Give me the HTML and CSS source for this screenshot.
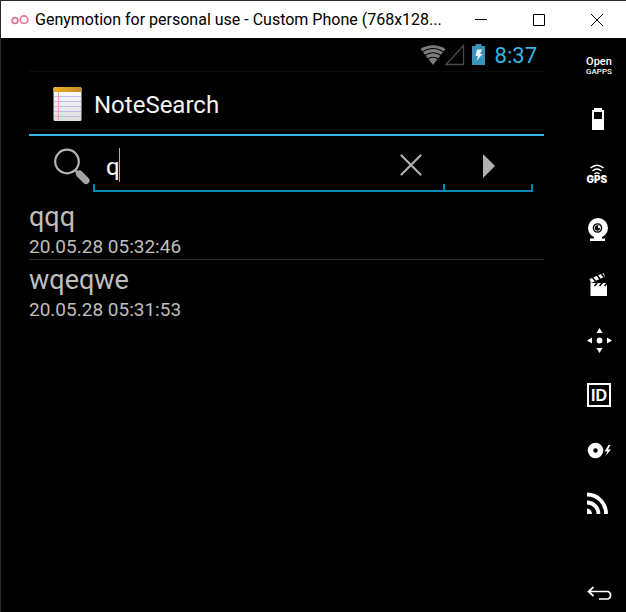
FILE: index.html
```html
<!DOCTYPE html>
<html lang="en">
<head>
<meta charset="utf-8">
<title>Genymotion for personal use</title>
<link rel="stylesheet" href="styles.css">
</head>
<body>
<div class="window">
  <header class="titlebar">
    <svg class="logo" viewBox="11 12 18 14" aria-hidden="true"><g fill="none" stroke="#e8709c" stroke-width="1.7"><circle cx="15" cy="19.5" r="2.9"/><circle cx="24" cy="18.7" r="3.8"/></g></svg>
    <h1 class="title">Genymotion for personal use - Custom Phone (768x128...</h1>
    <button class="win-btn" aria-label="Minimize"><svg viewBox="0 0 12 12"><path d="M0 5.5h12"/></svg></button>
    <button class="win-btn" aria-label="Maximize"><svg viewBox="0 0 12 12"><path d="M.5.5h11v11H.5z"/></svg></button>
    <button class="win-btn" aria-label="Close"><svg viewBox="0 0 12 12"><path d="M0 0l12 12M12 0L0 12"/></svg></button>
  </header>
  <div class="body">
    <main class="phone">
      <div class="status">
        <svg class="status-icons" viewBox="420 42 66 26" aria-hidden="true">
          <path d="M420.500 49Q433 41.500 445.500 49L433 65z" fill="#7d7d7d"/>
          <g fill="none" stroke="#000" stroke-width="1.100"><path d="M421.500 52.500Q433 44.500 444.500 52.500M424 56Q433 49.500 442 56M427 59.500Q433 55 439 59.500"/></g>
          <path d="M463.500 45.500v19h-17.500z" fill="none" stroke="#4a4a4a" stroke-width="1.300"/>
          <path d="M472 46h3.500v-2h6v2h3.500v19h-13z" fill="#3a94b9"/>
          <path d="M477 49.500h5l-2 4.500h2.500l-6 7 1.500-5h-2.500z" fill="#e8f4f8"/>
        </svg>
        <time class="clock">8:37</time>
      </div>
      <div class="actionbar">
        <svg class="app-icon" viewBox="0 0 30 34" aria-hidden="true">
          <defs><linearGradient id="paper" x2="0" y2="1"><stop stop-color="#fff"/><stop offset="1" stop-color="#dcdcdc"/></linearGradient><linearGradient id="band"><stop stop-color="#f3ae22"/><stop offset="1" stop-color="#c58a2c"/></linearGradient></defs>
          <rect x=".5" width="28" height="34" rx="1.500" fill="url(#paper)"/>
          <path d="M.5 5V1.500Q.5 0 2 0h25q1.500 0 1.500 1.500V5z" fill="url(#band)"/>
          <path d="M1 9.500h27M1 14.500h27M1 19.500h27M1 24.500h27M1 29.500h27" stroke="#bdbde8"/>
          <path d="M5.500 5v28" stroke="#f0a4a4"/>
        </svg>
        <h2 class="app-name">NoteSearch</h2>
      </div>
      <form class="search">
        <svg class="magnifier" viewBox="53 147 38 38" aria-hidden="true">
          <circle cx="67" cy="161.500" r="11.800" fill="none" stroke="#b5b5b5" stroke-width="2.200"/>
          <path d="M75 170l4 4" stroke="#a5a5a5" stroke-width="3"/>
          <path d="M79.500 174l6.500 6.500" stroke="#a5a5a5" stroke-width="7" stroke-linecap="round"/>
        </svg>
        <div class="field">
          <input class="query" type="text" value="q" aria-label="Search notes">
          <span class="caret"></span>
          <button class="clear" type="button" aria-label="Clear"><svg viewBox="0 0 22 22"><path d="M1.500 1.500l19 19M20.500 1.500l-19 19" stroke="#b0b0b0" stroke-width="2.200" stroke-linecap="round"/></svg></button>
        </div>
        <button class="submit" type="button" aria-label="Search"><svg viewBox="0 0 12 24"><path d="M0 0l12 12L0 24z" fill="#b0b0b0"/></svg></button>
      </form>
      <ul class="notes">
        <li class="note"><span class="note-title">qqq</span><time class="note-date">20.05.28 05:32:46</time></li>
        <li class="note"><span class="note-title">wqeqwe</span><time class="note-date">20.05.28 05:31:53</time></li>
      </ul>
    </main>
    <nav class="tools">
      <button class="tool gapps-tool" aria-label="Open GApps"><span class="open">Open</span><span class="gapps">GAPPS</span></button>
      <button class="tool" aria-label="Battery"><svg viewBox="572 93 54 55"><path d="M592 110h2v-2h8v2h2v20h-12z"/><path fill="#000" d="M594 112h8v7h-8z"/></svg></button>
      <button class="tool" aria-label="GPS"><svg viewBox="572 148 54 55"><g fill="none" stroke="#fff" stroke-width="1.500"><path d="M590.500 168Q597 162.500 603.500 168M592.500 171Q597 167 601.500 171M594.500 174Q597 171.500 599.500 174"/></g><text class="gps" x="586.500" y="183">GPS</text></svg></button>
      <button class="tool" aria-label="Camera"><svg viewBox="572 203 54 55"><circle cx="598" cy="228" r="10"/><path d="M594 236h8v2.500h3v2.500h-15v-2.500h4z"/><circle cx="597.500" cy="228" r="3.800" stroke="#000" stroke-width="2" fill="#000"/><circle cx="597.500" cy="228" r="3.200" fill="none" stroke="#fff" stroke-width=".8"/><circle cx="599" cy="227" r="1.200"/></svg></button>
      <button class="tool" aria-label="Capture"><svg viewBox="572 258 54 55"><path d="M590.500 283h16.500v13h-16.500zM589.500 279l14-6 1.500 3.500-14 6.500z"/><path d="M592 277l3.500 4M597 275l3 4M601 273l3 4M594.500 286l3-3.500M599.500 286l3-3.500M604.500 286l3-3.500" stroke="#000" stroke-width="1.500"/></svg></button>
      <button class="tool" aria-label="Remote control"><svg viewBox="572 313 54 55"><circle cx="599.500" cy="340.500" r="2.900"/><path d="M599.500 328l3 5h-6zM599.500 353l3-5h-6zM587 340.500l5-3v6zM612 340.500l-5-3v6z"/></svg></button>
      <button class="tool" aria-label="Identifiers"><svg viewBox="572 368 54 55"><path d="M588 384h22v22h-22z" fill="none" stroke="#fff" stroke-width="2"/><text class="id" x="591" y="401">ID</text></svg></button>
      <button class="tool" aria-label="Disk I/O"><svg viewBox="572 423 54 55"><circle cx="595.500" cy="450.500" r="5" fill="none" stroke="#fff" stroke-width="5.500"/><path d="M608.500 445l-4 6.500h3l-2 4.500 5.500-6.500h-3l2.500-4.500z"/></svg></button>
      <button class="tool" aria-label="Network"><svg viewBox="572 478 54 55"><path d="M587 494.500a19 19 0 0 1 19 19.500M587 502.500a11.500 11.500 0 0 1 11.500 11.500" fill="none" stroke="#fff" stroke-width="3.800"/><path d="M587 508.500a5.500 5.500 0 0 1 5 5.500h-5z"/></svg></button>
      <button class="tool back" aria-label="Back"><svg viewBox="571 566 54 55"><path d="M592.500 587l-5 4.500 5 4.500M588 591.500h19a4 4 0 0 1 0 7.500h-9" fill="none" stroke="#fff" stroke-width="1.700"/></svg></button>
    </nav>
  </div>
</div>
</body>
</html>
```
FILE: styles.css
```css
* { box-sizing: border-box; }
body { margin: 0; background: #000; }
h1, h2, ul { margin: 0; padding: 0; font-weight: 400; }
button { border: 0; padding: 0; background: none; color: inherit; font: inherit; }
svg { display: block; flex: none; }

.window {
  display: flex;
  flex-direction: column;
  height: 100vh;
  overflow: hidden;
  border-top: 1px solid #2b2b2b;
  border-left: 1px solid #2b2b2b;
  color: #fff;
  font-family: Roboto, sans-serif;
}

.titlebar {
  display: flex;
  align-items: center;
  height: 37px;
  flex: none;
  padding-left: 10px;
  background: #fff;
  color: #000;
}
.logo { width: 18px; height: 14px; }
.title {
  flex: 1;
  min-width: 0;
  padding-left: 6px;
  overflow: hidden;
  white-space: nowrap;
  font: 16px/24px Roboto, sans-serif;
}
.win-btn { display: grid; place-items: center; width: 58px; height: 36px; flex: none; }
.win-btn svg { width: 12px; height: 12px; fill: none; stroke: #000; }

.body { display: flex; flex: 1; min-height: 0; }
.phone { flex: 1; min-width: 0; padding: 0 28px; }

.status {
  display: flex;
  justify-content: flex-end;
  align-items: center;
  gap: 9px;
  height: 34px;
  padding-right: 7px;
  border-bottom: 1px solid #0c0c0c;
}
.status-icons { width: 66px; height: 26px; }
.clock { padding-top: 2px; font-size: 22px; line-height: 26px; color: #33b5e5; }

.actionbar {
  display: flex;
  align-items: center;
  gap: 11px;
  height: 64px;
  padding: 2px 0 0 24px;
  border-bottom: 2px solid #33b5e5;
}
.app-icon { width: 30px; height: 34px; }
.app-name { padding-top: 2px; font-size: 24px; line-height: 32px; color: #f3f3f3; }

.search { display: flex; height: 61px; padding: 0 11px 5px 24px; }
.magnifier { width: 38px; height: 38px; margin: 11px 2px 0 0; }
.field, .submit { position: relative; }
.field::after, .submit::after {
  content: "";
  position: absolute;
  inset: auto 0 0;
  height: 6px;
  border: 2px solid #0089b6;
  border-top: 0;
  pointer-events: none;
}
.field::after { border-right: 0; }
.field { display: flex; align-items: center; flex: 1; min-width: 0; }
.query {
  flex: 1;
  min-width: 0;
  height: 56px;
  padding: 6px 0 0 13px;
  border: 0;
  outline: 0;
  background: none;
  color: #fff;
  font: 24px/32px Roboto, sans-serif;
}
.caret { position: absolute; left: 26px; top: 12px; width: 1px; height: 34px; background: #aaa; }
.clear { display: grid; place-items: center; width: 64px; height: 56px; padding-top: 2px; }
.clear svg { width: 22px; height: 22px; }
.submit { display: grid; place-items: center; width: 90px; padding: 4px 0 0 2px; }
.submit svg { width: 12px; height: 24px; }

.notes { list-style: none; }
.note { display: flex; flex-direction: column; height: 63px; padding-top: 2px; color: #bebebe; }
.note:not(:last-child) { border-bottom: 1px solid #2c2c2c; }
.note-title { font-size: 27px; line-height: 36px; }
.note-date { font-size: 19px; line-height: 23px; }

.tools { display: flex; flex-direction: column; width: 54px; flex: none; }
.tool { display: block; width: 54px; height: 55px; flex: none; }
.tool svg { width: 54px; height: 55px; fill: #fff; }
.tool span { display: block; font-family: Roboto, sans-serif; font-weight: 500; }
.tool .open { font-size: 11px; line-height: 12px; }
.tool .gapps { font-size: 8px; line-height: 8px; }
.gps { font: 900 10px Inter, sans-serif; }
.id { font: 700 16px "Liberation Sans", sans-serif; }
.back { margin-top: auto; margin-bottom: -9px; }
```
